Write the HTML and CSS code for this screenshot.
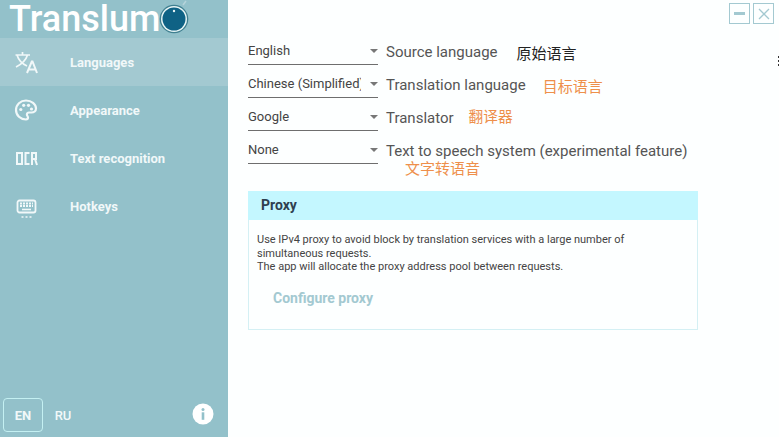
FILE: index.html
```html
<!DOCTYPE html>
<html lang="en">
<head>
    <meta charset="UTF-8">
    <meta name="viewport" content="width=device-width, initial-scale=1.0">
    <title>Translumo</title>
    <link rel="stylesheet" href="styles.css">
</head>
<body>
    <div class="app">
        <div class="sidebar">
            <div class="logo">
                <span class="logo-text">Translum</span>
                <svg class="logo-eye" width="32" height="34" viewBox="0 0 32 34">
                    <path d="M24 5 L27 1" stroke="#b5d3da" stroke-width="1.5" fill="none"/>
                    <circle cx="15" cy="19" r="14.300" fill="#3f7f90"/>
                    <circle cx="15" cy="19" r="13" fill="#e8f6f6"/>
                    <circle cx="15" cy="19" r="11.500" fill="#0f6285"/>
                    <circle cx="15" cy="11" r="1.200" fill="#e8f6f6"/>
                </svg>
            </div>

            <div class="nav">
                <div class="nav-item active">
                    <svg class="nav-icon" width="24" height="24" viewBox="0 0 24 24" fill="none" stroke="#f1f8f9" stroke-width="1.7">
                        <path d="M1.500 5 H16 M8.500 2 V5 M3 5 C4.500 10 8.500 14 13 16 M13.500 5 C12 10 8 14 2 17"/>
                        <path d="M13 23 L17.800 11.500 H18.500 L23 23 M14.500 19.500 H21.500" stroke-width="2"/>
                    </svg>
                    <span>Languages</span>
                </div>
                <div class="nav-item">
                    <svg class="nav-icon" width="24" height="24" viewBox="0 0 24 24" fill="none" stroke="#f1f8f9" stroke-width="2.200">
                        <path d="M12 2.500 C6.500 2.500 2 6.700 2 12 C2 17.300 6.500 21.500 12 21.500 C13.300 21.500 14 20.600 14 19.600 C14 18.200 12.900 17.800 12.900 16.500 C12.900 15.300 13.900 14.500 15 14.500 H17.500 C20 14.500 22 12.800 22 10.500 C22 6 17.500 2.500 12 2.500 Z"/>
                        <g fill="#f1f8f9" stroke="none">
                            <circle cx="6.800" cy="11.500" r="1.600"/>
                            <circle cx="9.700" cy="7.300" r="1.600"/>
                            <circle cx="14.500" cy="7.300" r="1.600"/>
                            <circle cx="17.500" cy="11" r="1.600"/>
                        </g>
                    </svg>
                    <span>Appearance</span>
                </div>
                <div class="nav-item">
                    <svg class="nav-icon" width="24" height="24" viewBox="0 0 24 24" fill="none" stroke="#f1f8f9" stroke-width="2">
                        <rect x="3" y="7" width="5" height="11"/>
                        <path d="M15.500 7 H11.500 V18 H15.500"/>
                        <path d="M18 19 V7 H22 V13 H18 M21 13 L23 19"/>
                    </svg>
                    <span>Text recognition</span>
                </div>
                <div class="nav-item">
                    <svg class="nav-icon" width="24" height="24" viewBox="0 0 24 24" fill="none" stroke="#f1f8f9" stroke-width="1.800">
                        <rect x="3.500" y="6.500" width="18" height="12" rx="2"/>
                        <path d="M6 9.500 H19 M6 12 H19" stroke-width="1.800" stroke-dasharray="2 1"/>
                        <path d="M8 15.500 H17" stroke-width="1.600"/>
                        <path d="M7.500 23 H9.500 M11.500 23 H13.500 M15.500 23 H17.500" stroke-width="1.500"/>
                    </svg>
                    <span>Hotkeys</span>
                </div>
            </div>

            <div class="sidebar-footer">
                <div class="lang-btn lang-active">EN</div>
                <div class="lang-btn">RU</div>
                <svg class="info" width="22" height="22" viewBox="0 0 22 22">
                    <circle cx="11" cy="11" r="10.500" fill="#fff"/>
                    <circle cx="11" cy="6.500" r="1.500" fill="#93c1ca"/>
                    <rect x="9.700" y="9.300" width="2.600" height="7.500" fill="#93c1ca"/>
                </svg>
            </div>
        </div>

        <div class="main">
            <div class="window-buttons">
                <div class="win-btn"><span class="win-min"></span></div>
                <div class="win-btn">
                    <svg width="12" height="12" viewBox="0 0 12 12" fill="none" stroke="#a3c9d1" stroke-width="1.300"><path d="M1 1 L11 11 M11 1 L1 11"/></svg>
                </div>
            </div>

            <div class="settings">
                <div class="row">
                    <div class="select"><span class="select-value">English</span><span class="arrow"></span></div>
                    <span class="label">Source language</span>
                    <span class="note note-source">原始语言</span>
                </div>
                <div class="row">
                    <div class="select"><span class="select-value">Chinese (Simplified)</span><span class="arrow"></span></div>
                    <span class="label">Translation language</span>
                    <span class="note note-target">目标语言</span>
                </div>
                <div class="row">
                    <div class="select"><span class="select-value">Google</span><span class="arrow"></span></div>
                    <span class="label">Translator</span>
                    <span class="note note-translator">翻译器</span>
                </div>
                <div class="row">
                    <div class="select"><span class="select-value">None</span><span class="arrow"></span></div>
                    <span class="label">Text to speech system (experimental feature)</span>
                </div>
                <div class="note note-under">文字转语音</div>
            </div>

            <div class="proxy">
                <div class="proxy-header">Proxy</div>
                <div class="proxy-body">
                    <p>Use IPv4 proxy to avoid block by translation services with a large number of simultaneous requests.<br>The app will allocate the proxy address pool between requests.</p>
                    <div class="proxy-link">Configure proxy</div>
                </div>
            </div>

            <div class="edge-mark"></div>
        </div>
    </div>
</body>
</html>
```

FILE: styles.css
```css
* {
    margin: 0;
    padding: 0;
    box-sizing: border-box;
}

body {
    font-family: Roboto, 'Noto Sans CJK SC', sans-serif;
    background: #fdffff;
    color: #444;
    overflow: hidden;
}

.app {
    display: flex;
    height: 437px;
}

.sidebar {
    width: 228px;
    background: #93c1ca;
    display: flex;
    flex-direction: column;
    flex-shrink: 0;
}

.logo {
    height: 38px;
    padding-left: 9px;
    display: flex;
    align-items: flex-start;
}

.logo-text {
    font-size: 36px;
    line-height: 38px;
    font-weight: 500;
    color: #fff;
}

.logo-eye {
    margin-left: -1px;
}

.nav {
    flex: 1;
}

.nav-item {
    height: 48px;
    display: flex;
    align-items: center;
    padding-left: 14px;
    gap: 32px;
    font-size: 13px;
    font-weight: 700;
    color: #f1f8f9;
}

.nav-item.active {
    background: #a3c9d1;
}

.sidebar-footer {
    height: 38px;
    margin-bottom: 3px;
    padding-left: 3px;
    padding-right: 14px;
    display: flex;
    align-items: center;
}

.lang-btn {
    width: 40px;
    height: 34px;
    padding-top: 1px;
    display: flex;
    align-items: center;
    justify-content: center;
    font-size: 13px;
    font-weight: 500;
    color: #f1f8f9;
    border-radius: 4px;
}

.lang-active {
    font-weight: 700;
    border: 1px solid #c4f0f2;
}

.info {
    margin-left: auto;
    margin-top: -3px;
}

.main {
    flex: 1;
    padding: 0 20px;
    position: relative;
}

.window-buttons {
    height: 32px;
    padding-top: 3px;
    margin-right: -15px;
    display: flex;
    justify-content: flex-end;
    gap: 3px;
}

.win-btn {
    width: 21px;
    height: 21px;
    border: 1px solid #a3c9d1;
    display: flex;
    align-items: center;
    justify-content: center;
}

.win-min {
    width: 11px;
    height: 3px;
    background: #a3c9d1;
}

.row {
    height: 33px;
    padding-top: 7px;
    display: flex;
    align-items: center;
}

.select {
    width: 130px;
    height: 33px;
    margin-top: -7px;
    padding-top: 11px;
    border-bottom: 1px solid #6e6e6e;
    display: flex;
    justify-content: space-between;
    font-size: 13px;
    line-height: 16px;
    color: #444;
}

.select-value {
    width: 113px;
    white-space: nowrap;
    overflow: hidden;
}

.arrow {
    width: 0;
    height: 0;
    margin-top: 6px;
    margin-right: 0;
    border-left: 4px solid transparent;
    border-right: 4px solid transparent;
    border-top: 4px solid #777;
}

.label {
    margin-left: 8px;
    font-size: 15px;
    line-height: 18px;
    color: #555;
    white-space: nowrap;
}

.note {
    font-size: 15px;
    line-height: 18px;
    color: #ee8f4b;
}

.note-source {
    margin-left: 19px;
    margin-top: 4px;
    color: #222;
}

.note-target {
    margin-left: 17px;
    margin-top: 4px;
}

.note-translator {
    margin-left: 15px;
    margin-top: -2px;
    font-size: 14.700px;
}

.note-under {
    margin-left: 157px;
    margin-top: -4px;
}

.proxy {
    width: 450px;
    height: 139px;
    margin-top: 13px;
    border: 1px solid #d4f0f4;
    border-top: none;
}

.proxy-header {
    height: 29px;
    margin: 0 -1px;
    padding-left: 13px;
    background: #c4f7ff;
    font-size: 14px;
    font-weight: 700;
    line-height: 29px;
    color: #2f3f4f;
}

.proxy-body {
    padding: 13px 8px;
    font-size: 11px;
    line-height: 13.500px;
    color: #444;
}

.proxy-link {
    margin-top: 15px;
    margin-left: 16px;
    font-size: 14px;
    line-height: 18px;
    font-weight: 700;
    color: #a3c9d1;
}

/* bit of the next window showing at the screen edge */
.edge-mark {
    position: absolute;
    top: 56px;
    right: 0;
    width: 1px;
    height: 12px;
    background: repeating-linear-gradient(#333 0 2px, transparent 2px 4px);
}
```
